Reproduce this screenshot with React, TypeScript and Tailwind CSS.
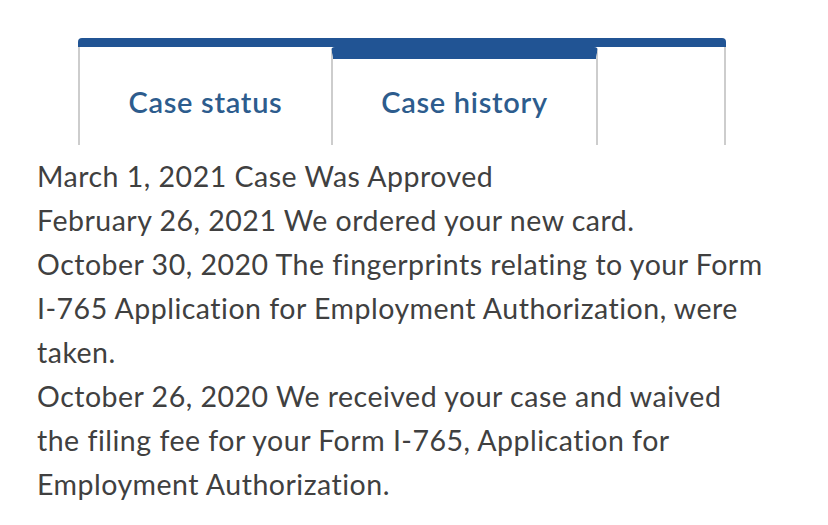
import React from "react";

const entries: string[][] = [
  ["March 1, 2021 Case Was Approved"],
  ["February 26, 2021 We ordered your new card."],
  [
    "October 30, 2020 The fingerprints relating to your Form",
    "I-765 Application for Employment Authorization, were",
    "taken.",
  ],
  [
    "October 26, 2020 We received your case and waived",
    "the filing fee for your Form I-765, Application for",
    "Employment Authorization.",
  ],
];

export default function App() {
  return (
    <div className="w-[828px] h-[525px] overflow-hidden bg-white font-['Lato','Noto_Sans',sans-serif]">
      <div className="pt-[38px] pl-[78px] w-[726px]">
        <div className="h-[9px] bg-[#215494] rounded-t-[4px]" />
        <div className="flex h-[98px]">
          <div className="w-[253px] border-l-2 border-[#cdcdcd] pt-[12px] flex items-center justify-center">
            <span className="text-[29px] tracking-[0.7px] font-semibold text-[#2d5c8d]">Case status</span>
          </div>
          <div className="w-[267px] border-x-2 border-[#cdcdcd] border-t-[12px] border-t-[#215494] rounded-t-[4px] flex items-center justify-center">
            <span className="text-[29px] tracking-[0.7px] font-semibold text-[#2d5c8d]">Case history</span>
          </div>
          <div className="flex-1 border-r-2 border-[#cdcdcd]" />
        </div>
      </div>
      <div className="pl-[37px] mt-[9px] text-[28.5px] leading-[44px] text-[#404040] tracking-[0.5px] whitespace-nowrap">
        {entries.map((lines, i) => (
          <p key={i}>
            {lines.map((l, j) => (
              <React.Fragment key={j}>
                {l}
                {j < lines.length - 1 && <br />}
              </React.Fragment>
            ))}
          </p>
        ))}
      </div>
    </div>
  );
}
